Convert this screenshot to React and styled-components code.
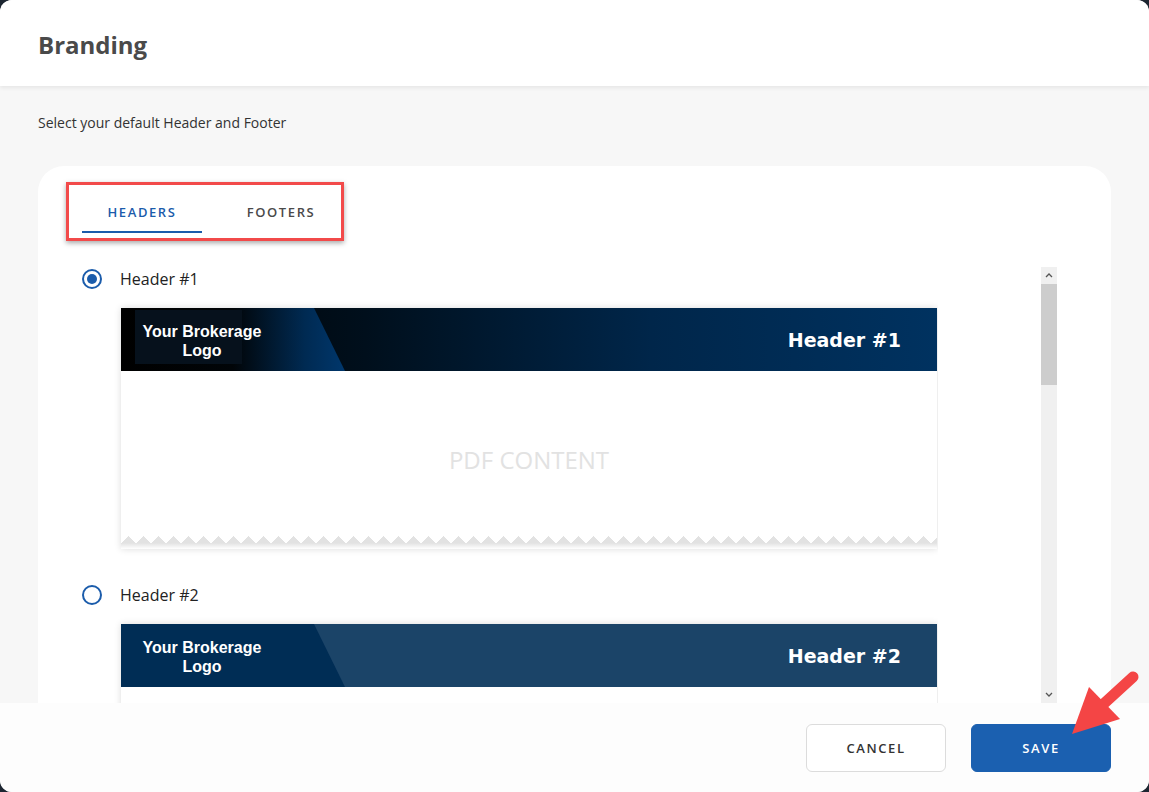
import styled, { createGlobalStyle } from "styled-components";

const GlobalStyle = createGlobalStyle`
  html, body {
    margin: 0;
    padding: 0;
    background: #1d2631;
  }
  body {
    font-family: "Open Sans", "Liberation Sans", sans-serif;
  }
`;

const headers = [
  { id: 1, label: "Header #1", variant: "dark", selected: true },
  { id: 2, label: "Header #2", variant: "navy", selected: false },
];

function Chevron({ up }) {
  return (
    <svg width="8" height="6" viewBox="0 0 8 6">
      <path
        d={up ? "M1 5 L4 2 L7 5" : "M1 1 L4 4 L7 1"}
        fill="none"
        stroke="#555"
        strokeWidth="1.3"
      />
    </svg>
  );
}

function PreviewCard({ label, variant }) {
  return (
    <Preview>
      <Band variant={variant}>
        <LogoShape variant={variant}>
          {variant === "dark" && <LogoBox />}
          <LogoText>
            Your Brokerage
            <br />
            Logo
          </LogoText>
        </LogoShape>
        <BandTitle>{label}</BandTitle>
      </Band>
      <PaperBody>PDF CONTENT</PaperBody>
      <Tear />
    </Preview>
  );
}

export default function App() {
  return (
    <>
      <GlobalStyle />
      <Modal>
        <Header>
          <Title>Branding</Title>
        </Header>
        <Body>
          <Intro>Select your default Header and Footer</Intro>
          <Card>
            <TabBar>
              <Tab active>HEADERS</Tab>
              <Tab>FOOTERS</Tab>
              <Annotation />
            </TabBar>
            <ScrollRegion>
              <List>
                {headers.map((h) => (
                  <Item key={h.id}>
                    <RadioRow>
                      <Radio checked={h.selected} />
                      <span>{h.label}</span>
                    </RadioRow>
                    <PreviewCard label={h.label} variant={h.variant} />
                  </Item>
                ))}
              </List>
              <Scrollbar>
                <ScrollArrow>
                  <Chevron up />
                </ScrollArrow>
                <Thumb />
                <Track />
                <ScrollArrow>
                  <Chevron />
                </ScrollArrow>
              </Scrollbar>
            </ScrollRegion>
          </Card>
        </Body>
        <Footer>
          <Button>CANCEL</Button>
          <Button primary>SAVE</Button>
          <Arrow width="109" height="80" viewBox="0 0 109 80">
            <line x1="93" y1="14" x2="58" y2="46" stroke="#f44545" strokeWidth="11" strokeLinecap="round" />
            <polygon points="32,71 49,24 80,56" fill="#f44545" />
          </Arrow>
        </Footer>
      </Modal>
    </>
  );
}

const Modal = styled.div`
  position: relative;
  width: 1149px;
  height: 792px;
  display: flex;
  flex-direction: column;
  background: #f7f7f7;
  border-radius: 12px;
  overflow: hidden;
`;

const Header = styled.div`
  height: 86px;
  flex-shrink: 0;
  display: flex;
  align-items: center;
  padding-left: 38px;
  background: #fff;
  box-shadow: 0 2px 4px rgba(0, 0, 0, 0.07);
  position: relative;
  z-index: 1;
`;

const Title = styled.h1`
  margin: 0;
  font-size: 24px;
  font-weight: 700;
  color: #4a4a4a;
  padding-top: 3px;
`;

const Body = styled.div`
  flex: 1;
  min-height: 0;
  display: flex;
  flex-direction: column;
  padding: 27px 38px 0;
  overflow: hidden;
`;

const Intro = styled.p`
  margin: 0;
  font-size: 14px;
  line-height: 20px;
  color: #333;
`;

const Card = styled.div`
  flex: 1;
  min-height: 0;
  margin-top: 33px;
  background: #fff;
  border-radius: 26px 26px 0 0;
  display: flex;
  flex-direction: column;
  padding: 24px 54px 0 44px;
`;

const TabBar = styled.div`
  position: relative;
  display: flex;
  gap: 19px;
`;

const Tab = styled.div`
  width: 120px;
  height: 43px;
  box-sizing: border-box;
  display: flex;
  align-items: center;
  justify-content: center;
  font-size: 13px;
  font-weight: 600;
  letter-spacing: 1.6px;
  color: ${({ active }) => (active ? "#1b5cab" : "#4a4a4a")};
  border-bottom: 2px solid ${({ active }) => (active ? "#1b5cab" : "transparent")};
  padding-top: 2px;
`;

const Annotation = styled.div`
  position: absolute;
  left: -16px;
  top: -8px;
  width: 278px;
  height: 59px;
  box-sizing: border-box;
  border: 3px solid #f24a4a;
  box-shadow: 0 2px 5px rgba(0, 0, 0, 0.35);
  pointer-events: none;
`;

const ScrollRegion = styled.div`
  flex: 1;
  min-height: 0;
  margin-top: 34px;
  display: flex;
`;

const List = styled.div`
  flex: 1;
  min-width: 0;
  overflow: hidden;
  display: flex;
  flex-direction: column;
  gap: 34px;
`;

const Item = styled.div`
  display: flex;
  flex-direction: column;
  gap: 17px;
`;

const RadioRow = styled.label`
  display: flex;
  align-items: center;
  gap: 18px;
  height: 24px;
  font-size: 16px;
  color: #222;
`;

const Radio = styled.span`
  width: 20px;
  height: 20px;
  box-sizing: border-box;
  border-radius: 50%;
  border: 2px solid #1b5cab;
  display: flex;
  align-items: center;
  justify-content: center;
  &::after {
    content: "";
    width: 10px;
    height: 10px;
    border-radius: 50%;
    background: ${({ checked }) => (checked ? "#1b5cab" : "transparent")};
  }
`;

const Preview = styled.div`
  margin-left: 39px;
  width: 816px;
  flex-shrink: 0;
  background: #fff;
  display: flex;
  flex-direction: column;
  box-shadow: 0 0 7px rgba(0, 0, 0, 0.14);
`;

const Band = styled.div`
  height: 63px;
  display: flex;
  align-items: center;
  justify-content: space-between;
  background: ${({ variant }) =>
    variant === "dark"
      ? "linear-gradient(90deg, #000000 0%, #000f1c 30%, #00264a 65%, #003260 100%)"
      : "#1b4468"};
`;

const LogoShape = styled.div`
  position: relative;
  width: 224px;
  height: 100%;
  clip-path: polygon(0 0, 193px 0, 224px 100%, 0 100%);
  background: ${({ variant }) =>
    variant === "dark"
      ? "linear-gradient(90deg, #000 0%, #010508 50%, #002a52 82%, #00376c 100%)"
      : "#002d55"};
  display: flex;
  align-items: center;
`;

const LogoBox = styled.div`
  position: absolute;
  left: 14px;
  top: 2px;
  width: 107px;
  height: 54px;
  background: #06111c;
`;

const LogoText = styled.div`
  position: relative;
  margin-left: 19px;
  padding-top: 3px;
  width: 124px;
  text-align: center;
  font-family: "Liberation Sans", Arial, sans-serif;
  font-weight: 700;
  font-size: 16px;
  line-height: 19px;
  color: #fff;
`;

const BandTitle = styled.div`
  padding-right: 36px;
  font-family: "DejaVu Sans", Verdana, sans-serif;
  font-weight: 700;
  font-size: 19px;
  color: #fff;
`;

const PaperBody = styled.div`
  height: 165px;
  display: flex;
  align-items: center;
  justify-content: center;
  font-size: 24px;
  color: #e2e2e2;
  padding-top: 12px;
  box-sizing: border-box;
`;

const Tear = styled.div`
  height: 13px;
  background:
    conic-gradient(from 133deg at 50% 0, #e2e2e2 94deg, #fff 0) 0 0 / 15px 7px repeat-x,
    linear-gradient(#e2e2e2, rgba(255, 255, 255, 0)) 0 7px / 100% 6px no-repeat,
    #fff;
`;

const Scrollbar = styled.div`
  width: 16px;
  flex-shrink: 0;
  margin-left: 103px;
  display: flex;
  flex-direction: column;
  background: #f0f0f0;
`;

const ScrollArrow = styled.div`
  height: 16px;
  flex-shrink: 0;
  display: flex;
  align-items: center;
  justify-content: center;
`;

const Thumb = styled.div`
  height: 101px;
  margin: 1px 0;
  flex-shrink: 0;
  background: #cdcdcd;
`;

const Track = styled.div`
  flex: 1;
`;

const Footer = styled.div`
  position: relative;
  height: 89px;
  flex-shrink: 0;
  box-sizing: border-box;
  background: #fdfdfd;
  display: flex;
  justify-content: flex-end;
  align-items: flex-start;
  gap: 25px;
  padding: 21px 38px 0 0;
`;

const Button = styled.button`
  width: 140px;
  height: 48px;
  border-radius: 6px;
  font-family: "Open Sans", sans-serif;
  font-size: 13px;
  font-weight: 600;
  letter-spacing: 1.6px;
  cursor: pointer;
  border: 1px solid ${({ primary }) => (primary ? "#1b60b0" : "#dcdcdc")};
  background: ${({ primary }) => (primary ? "#1b60b0" : "#fff")};
  color: ${({ primary }) => (primary ? "#fff" : "#333")};
`;

const Arrow = styled.svg`
  position: absolute;
  left: 1040px;
  top: -40px;
  pointer-events: none;
`;
